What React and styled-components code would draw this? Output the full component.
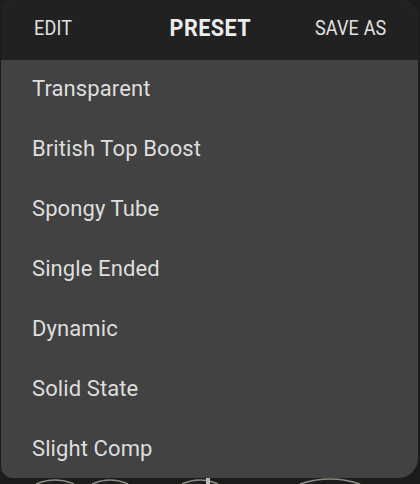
import React from 'react';
import styled, { createGlobalStyle } from 'styled-components';

const GlobalStyle = createGlobalStyle`
    html, body {
        margin: 0;
        padding: 0;
        background: #1c1c1c;
        width: 420px;
        height: 484px;
        overflow: hidden;
    }
`;

const Stage = styled.div`
    position: relative;
    width: 420px;
    height: 484px;
    background: #1c1c1c;
    font-family: Roboto, "Liberation Sans", sans-serif;
`;

const Knobs = styled.svg`
    position: absolute;
    left: 0;
    bottom: 0;
`;

const Panel = styled.div`
    position: relative;
    margin-left: 1px;
    width: 417px;
    height: 478px;
    background: #424242;
    border-radius: 10px 18px 20px 12px;
    overflow: hidden;
    display: flex;
    flex-direction: column;
`;

const Header = styled.header`
    height: 60px;
    flex-shrink: 0;
    background: #212121;
    display: grid;
    grid-template-columns: 1fr auto 1fr;
    align-items: center;
    padding: 0 32px 4px 33px;
    box-sizing: border-box;
`;

const HeaderButton = styled.span`
    font-size: 20px;
    color: #e2e2e2;
    letter-spacing: 0.2px;
    transform: scaleX(0.9);
    transform-origin: ${p => (p.$right ? 'right' : 'left')} center;
    justify-self: ${p => (p.$right ? 'end' : 'start')};
`;

const Title = styled.h1`
    margin: 0;
    font-size: 24px;
    font-weight: 700;
    color: #ececec;
    letter-spacing: 0.5px;
    transform: scaleX(0.9);
`;

const List = styled.ul`
    list-style: none;
    margin: 0;
    padding: 0;
`;

const Item = styled.li`
    height: 60px;
    box-sizing: border-box;
    display: flex;
    align-items: center;
    padding: 0 0 4px 31px;
    font-size: 22px;
    color: #dedede;
    letter-spacing: 0.1px;
`;

const presets = [
    'Transparent',
    'British Top Boost',
    'Spongy Tube',
    'Single Ended',
    'Dynamic',
    'Solid State',
    'Slight Comp',
];

export default function App() {
    return (
        <Stage>
            <GlobalStyle />
            <Knobs width="420" height="10" viewBox="0 0 420 10">
                <path d="M36 10 Q55 2 74 10" stroke="#8a8a80" strokeWidth="1.5" fill="none" />
                <path d="M92 10 Q110 2 128 10" stroke="#8a8a80" strokeWidth="1.5" fill="none" />
                <path d="M182 10 Q200 2 218 10" stroke="#8a8a80" strokeWidth="1.5" fill="none" />
                <rect x="206" y="3" width="4" height="7" fill="#bdbdbd" />
                <path d="M300 10 Q330 0 360 10" stroke="#8a8a80" strokeWidth="1.5" fill="none" />
            </Knobs>
            <Panel>
                <Header>
                    <HeaderButton>EDIT</HeaderButton>
                    <Title>PRESET</Title>
                    <HeaderButton $right>SAVE AS</HeaderButton>
                </Header>
                <List>
                    {presets.map(name => (
                        <Item key={name}>{name}</Item>
                    ))}
                </List>
            </Panel>
        </Stage>
    );
}
